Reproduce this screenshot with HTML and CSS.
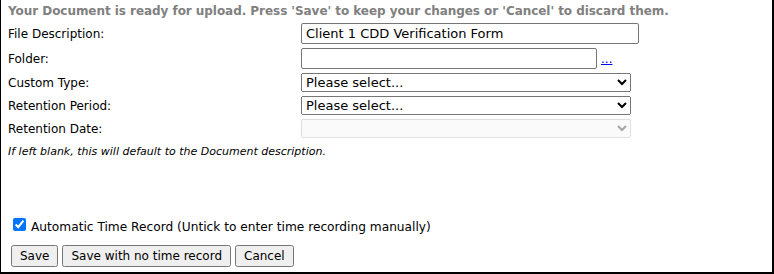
FILE: index.html
```html
<!DOCTYPE html>
<html>
<head>
<meta charset="utf-8">
<link rel="stylesheet" href="styles.css">
</head>
<body>
<div class="frame">
  <div class="notice">Your Document is ready for upload. Press 'Save' to keep your changes or 'Cancel' to discard them.</div>
  <div class="form">
    <label class="lbl r1">File Description:</label>
    <div class="fld r1"><input class="txt wide" type="text" value="Client 1 CDD Verification Form"></div>
    <label class="lbl r2">Folder:</label>
    <div class="fld r2"><input class="txt folder" type="text" value=""><a class="dots" href="#">...</a></div>
    <label class="lbl r3">Custom Type:</label>
    <div class="fld r3"><select class="sel"><option>Please select...</option></select></div>
    <label class="lbl r4">Retention Period:</label>
    <div class="fld r4"><select class="sel"><option>Please select...</option></select></div>
    <label class="lbl r5">Retention Date:</label>
    <div class="fld r5"><select class="sel" disabled><option></option></select></div>
  </div>
  <div class="note">If left blank, this will default to the Document description.</div>
  <div class="auto"><input type="checkbox" checked class="chk" id="atr"><label class="autolbl" for="atr">Automatic Time Record (Untick to enter time recording manually)</label></div>
  <div class="buttons">
    <button class="btn">Save</button>
    <button class="btn">Save with no time record</button>
    <button class="btn">Cancel</button>
  </div>
</div>
</body>
</html>
```
FILE: styles.css
```css
html, body { margin: 0; padding: 0; background: #fff; }
body { width: 774px; height: 274px; overflow: hidden; }
.frame {
  box-sizing: border-box;
  width: 774px; height: 274px;
  border-left: 1px solid #000;
  border-right: 2px solid #000;
  border-bottom: 2px solid #000;
  font-family: "DejaVu Sans", Verdana, sans-serif;
  font-size: 12px;
  color: #000;
  padding: 3px 0 0 7px;
}
.notice { font-weight: bold; color: #808080; height: 18px; line-height: 16px; letter-spacing: -0.05px; }
.form {
  display: grid;
  grid-template-columns: 293px 1fr;
  row-gap: 0;
}
.lbl { display: flex; align-items: center; height: 25px; }
.fld { display: flex; align-items: center; height: 25px; }
.r3, .r4, .r5 { height: 23px; }
.txt {
  box-sizing: border-box;
  height: 21px;
  border: 1px solid #767676;
  border-radius: 2px;
  font-family: inherit; font-size: 13px;
  padding: 0 4px;
  margin: 0;
}
.wide { width: 338px; }
.folder { width: 296px; }
.dots { color: #0000ee; margin-left: 4px; font-size: 12px; line-height: 12px; }
.sel {
  box-sizing: border-box;
  width: 330px; height: 19px;
  font-family: inherit; font-size: 13px;
  margin: 0;
}
.note { font-style: italic; font-size: 11px; margin-top: 5px; height: 15px; }
.auto { display: flex; align-items: flex-start; margin-top: 58px; padding-left: 5px; font-size: 12.2px; height: 16px; }
.chk { margin: 0 5px 0 0; width: 13px; height: 13px; }
.autolbl { margin-top: 2px; line-height: 15px; }
.buttons { display: flex; gap: 4px; margin-top: 11px; padding-left: 3px; }
.btn { font-family: inherit; font-size: 12px; height: 22px; padding: 0 7px; margin: 0; }
```
